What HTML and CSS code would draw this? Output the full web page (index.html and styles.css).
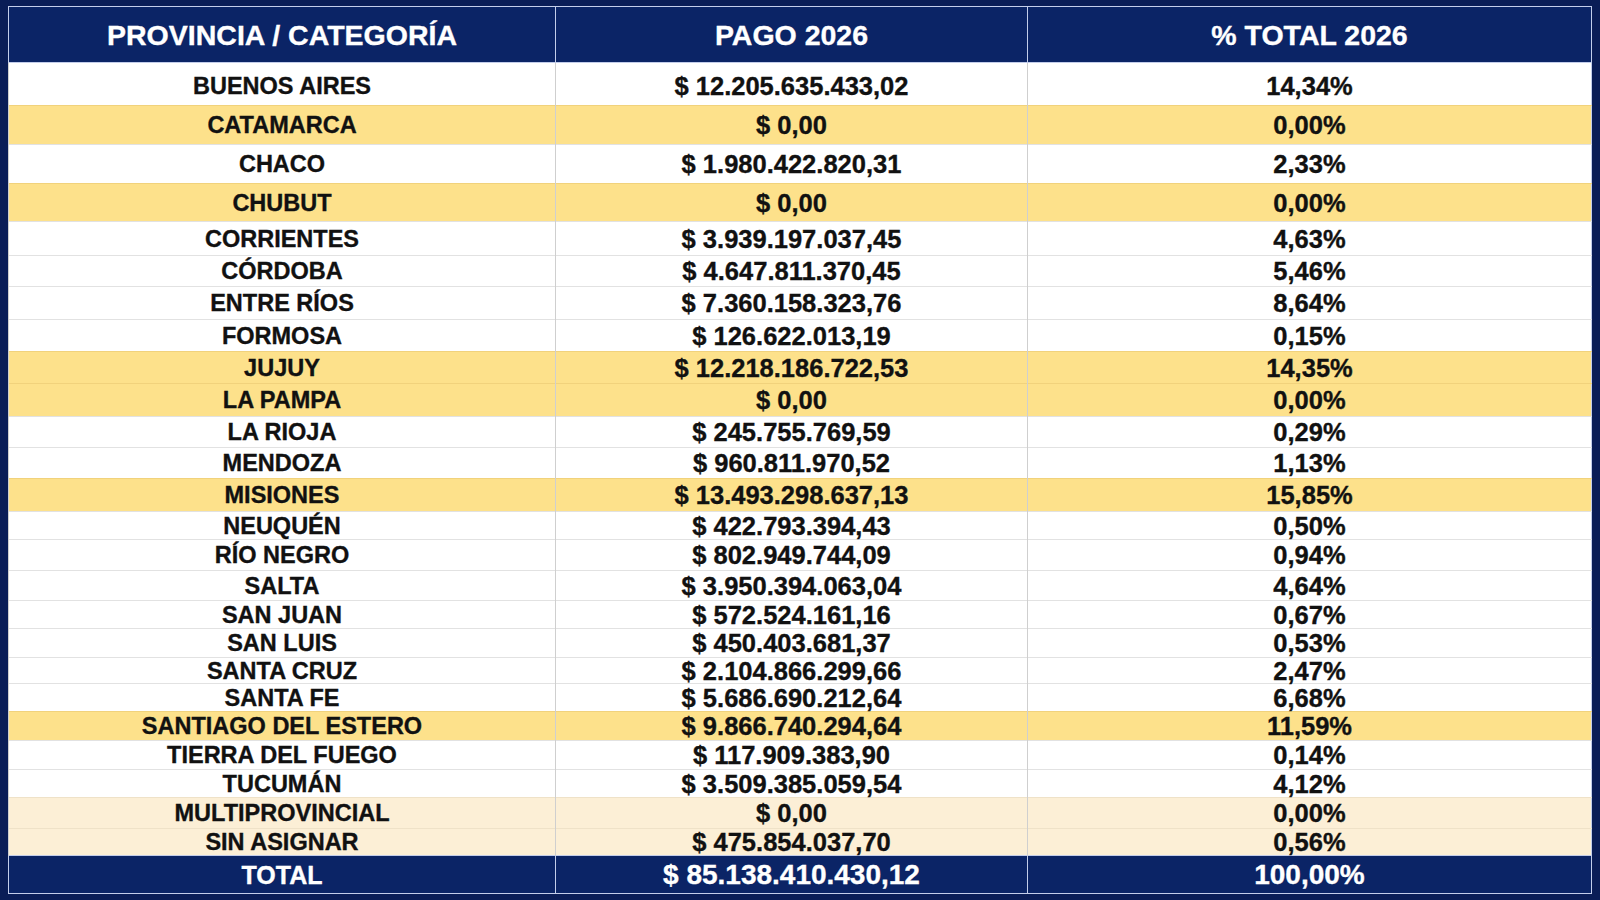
FILE: index.html
```html
<!DOCTYPE html>
<html lang="es">

<head>
    <meta charset="UTF-8">
    <meta name="viewport" content="width=device-width, initial-scale=1.0">
    <title>Pagos 2026 por provincia</title>

    <link rel="stylesheet" href="styles.css">
</head>

<body>

    <table class="sheet">
        <thead>
            <tr>
                <th>PROVINCIA / CATEGORÍA</th>
                <th>PAGO 2026</th>
                <th>% TOTAL 2026</th>
            </tr>
        </thead>
        <tbody>
            <tr><td>BUENOS AIRES</td><td>$ 12.205.635.433,02</td><td>14,34%</td></tr>
            <tr class="gold"><td>CATAMARCA</td><td>$ 0,00</td><td>0,00%</td></tr>
            <tr><td>CHACO</td><td>$ 1.980.422.820,31</td><td>2,33%</td></tr>
            <tr class="gold"><td>CHUBUT</td><td>$ 0,00</td><td>0,00%</td></tr>
            <tr><td>CORRIENTES</td><td>$ 3.939.197.037,45</td><td>4,63%</td></tr>
            <tr><td>CÓRDOBA</td><td>$ 4.647.811.370,45</td><td>5,46%</td></tr>
            <tr><td>ENTRE RÍOS</td><td>$ 7.360.158.323,76</td><td>8,64%</td></tr>
            <tr><td>FORMOSA</td><td>$ 126.622.013,19</td><td>0,15%</td></tr>
            <tr class="gold"><td>JUJUY</td><td>$ 12.218.186.722,53</td><td>14,35%</td></tr>
            <tr class="gold"><td>LA PAMPA</td><td>$ 0,00</td><td>0,00%</td></tr>
            <tr><td>LA RIOJA</td><td>$ 245.755.769,59</td><td>0,29%</td></tr>
            <tr><td>MENDOZA</td><td>$ 960.811.970,52</td><td>1,13%</td></tr>
            <tr class="gold"><td>MISIONES</td><td>$ 13.493.298.637,13</td><td>15,85%</td></tr>
            <tr><td>NEUQUÉN</td><td>$ 422.793.394,43</td><td>0,50%</td></tr>
            <tr><td>RÍO NEGRO</td><td>$ 802.949.744,09</td><td>0,94%</td></tr>
            <tr><td>SALTA</td><td>$ 3.950.394.063,04</td><td>4,64%</td></tr>
            <tr><td>SAN JUAN</td><td>$ 572.524.161,16</td><td>0,67%</td></tr>
            <tr><td>SAN LUIS</td><td>$ 450.403.681,37</td><td>0,53%</td></tr>
            <tr><td>SANTA CRUZ</td><td>$ 2.104.866.299,66</td><td>2,47%</td></tr>
            <tr><td>SANTA FE</td><td>$ 5.686.690.212,64</td><td>6,68%</td></tr>
            <tr class="gold"><td>SANTIAGO DEL ESTERO</td><td>$ 9.866.740.294,64</td><td>11,59%</td></tr>
            <tr><td>TIERRA DEL FUEGO</td><td>$ 117.909.383,90</td><td>0,14%</td></tr>
            <tr><td>TUCUMÁN</td><td>$ 3.509.385.059,54</td><td>4,12%</td></tr>
            <tr class="cream"><td>MULTIPROVINCIAL</td><td>$ 0,00</td><td>0,00%</td></tr>
            <tr class="cream"><td>SIN ASIGNAR</td><td>$ 475.854.037,70</td><td>0,56%</td></tr>
        </tbody>
        <tfoot>
            <tr>
                <td>TOTAL</td>
                <td>$ 85.138.410.430,12</td>
                <td>100,00%</td>
            </tr>
        </tfoot>
    </table>

</body>

</html>
```

FILE: styles.css
```css
body {
    margin: 0;
    height: 900px;
    padding: 6px 8px 0;
    box-sizing: border-box;
    background-color: #0a1d57;
    font-family: "Liberation Sans", Arial, sans-serif;
}

.sheet {
    width: 1584px;
    border-collapse: collapse;
    table-layout: fixed;
    border: 1px solid #c3cdea;
    background-color: white;
    color: #111;
    text-align: center;
    font-weight: bold;
    -webkit-text-stroke: 0.35px currentColor;
}

.sheet th:nth-child(1) {
    width: 546px;
}

.sheet th:nth-child(2) {
    width: 471px;
}

th,
td {
    padding: 0;
    line-height: 18px;
    white-space: nowrap;
    vertical-align: middle;
}

th {
    background-color: #0b2466;
    color: white;
    font-size: 28.5px;
    border-left: 1px solid #c3cdea;
    border-bottom: 1px solid #c3cdea;
}

tbody td {
    font-size: 25.5px;
    border-left: 1px solid #cfcfcf;
    border-top: 1px solid #e2e2e2;
}

tbody td:first-child {
    font-size: 23.5px;
}

tbody tr:first-child td {
    border-top: none;
    padding-top: 3px;
}

.gold td {
    background-color: #fde18b;
    border-top-color: #f1d27c;
}

.cream td {
    background-color: #fcefd6;
    border-top-color: #efe2c8;
}

tfoot td {
    background-color: #0b2466;
    color: white;
    font-size: 28px;
    border-left: 1px solid #c3cdea;
    border-top: 1px solid #c3cdea;
}

tfoot td:first-child {
    font-size: 25px;
}

/* row heights follow the spreadsheet capture */
thead tr { height: 56px; }
tbody tr:nth-child(1) { height: 43px; }
tbody tr:nth-child(2) { height: 39px; }
tbody tr:nth-child(3) { height: 39px; }
tbody tr:nth-child(4) { height: 38px; }
tbody tr:nth-child(5) { height: 34px; }
tbody tr:nth-child(6) { height: 31px; }
tbody tr:nth-child(7) { height: 33px; }
tbody tr:nth-child(8) { height: 32px; }
tbody tr:nth-child(9) { height: 32px; }
tbody tr:nth-child(10) { height: 33px; }
tbody tr:nth-child(11) { height: 31px; }
tbody tr:nth-child(12) { height: 31px; }
tbody tr:nth-child(13) { height: 33px; }
tbody tr:nth-child(14) { height: 28px; }
tbody tr:nth-child(15) { height: 31px; }
tbody tr:nth-child(16) { height: 30px; }
tbody tr:nth-child(17) { height: 28px; }
tbody tr:nth-child(18) { height: 29px; }
tbody tr:nth-child(19) { height: 26px; }
tbody tr:nth-child(20) { height: 28px; }
tbody tr:nth-child(21) { height: 29px; }
tbody tr:nth-child(22) { height: 29px; }
tbody tr:nth-child(23) { height: 28px; }
tbody tr:nth-child(24) { height: 31px; }
tbody tr:nth-child(25) { height: 27px; }
tfoot tr { height: 38px; }
```
